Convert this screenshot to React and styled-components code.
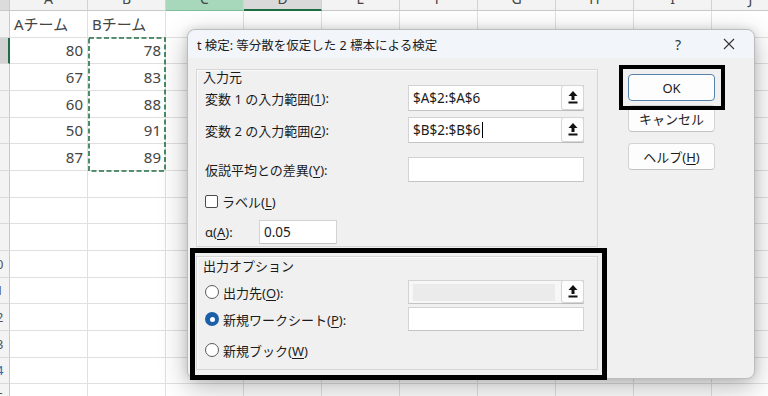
import React from 'react';
import styled, { createGlobalStyle } from 'styled-components';

const FONT = `"Noto Sans", "Noto Sans CJK JP", sans-serif`;

const GlobalStyle = createGlobalStyle`
  html, body { margin: 0; padding: 0; width: 768px; height: 396px; overflow: hidden; background: #fff; }
  #root { width: 768px; height: 396px; }
  * { box-sizing: border-box; }
`;

const Screen = styled.div`
  position: relative;
  width: 768px;
  height: 396px;
  overflow: hidden;
  background: #fff;
  font-family: ${FONT};
`;

/* ---------- spreadsheet ---------- */
const Sheet = styled.div`
  display: grid;
  grid-template-columns: 10px repeat(10, 78px);
  grid-template-rows: 11px repeat(15, 26.667px);
`;

const Corner = styled.div`
  background: #dcdcdc;
  border-right: 1px solid #c9c9c9;
  border-bottom: 1px solid #c9c9c9;
`;

const ColHeader = styled.div`
  overflow: hidden;
  display: flex;
  justify-content: center;
  background: ${p => (p.$state === 'green' ? '#a8d8bc' : p.$state === 'gray' ? '#d9d9d9' : '#f3f3f3')};
  border-right: 1px solid #d2d2d2;
  border-bottom: ${p => (p.$state === 'gray' ? '2px solid #1f6e43' : p.$state === 'green' ? '1px solid #7dbf98' : '1px solid #c9c9c9')};
  color: #444;
  font-size: 14px;
  span { display: block; line-height: 20px; margin-top: -11px; }
`;

const RowHead = styled.div`
  overflow: hidden;
  display: flex;
  align-items: center;
  background: ${p => (p.$active ? '#d3d3d3' : '#f3f3f3')};
  border-right: ${p => (p.$active ? '2px solid #1f6e43' : '1px solid #c9c9c9')};
  border-bottom: 1px solid #d9d9d9;
  font-size: 13px;
  color: ${p => (p.$blue ? '#2a6ab0' : '#555')};
  span { flex: none; width: 24px; margin-left: -16px; text-align: center; }
`;

const Cell = styled.div`
  border-right: 1px solid #e0e0e0;
  border-bottom: 1px solid #e0e0e0;
  display: flex;
  align-items: center;
  justify-content: ${p => (p.$num ? 'flex-end' : 'flex-start')};
  padding: 0 4px;
  font-size: 15px;
  color: #444;
  white-space: nowrap;
  overflow: hidden;
`;

const Marquee = styled.svg`
  position: absolute;
  left: 88px;
  top: 37px;
  width: 78px;
  height: 135px;
  overflow: visible;
`;

/* ---------- dialog ---------- */
const Dialog = styled.div`
  position: absolute;
  left: 187px;
  top: 29px;
  width: 568px;
  height: 350px;
  background: #f0f0f0;
  border: 1px solid #bcbcbc;
  border-radius: 8px;
  box-shadow: 0 8px 28px rgba(0, 0, 0, 0.28), 0 0 8px rgba(0, 0, 0, 0.12);
  display: flex;
  flex-direction: column;
  color: #1b1b1b;
`;

const TitleBar = styled.div`
  height: 28px;
  flex: none;
  display: flex;
  align-items: center;
  padding-left: 9px;
  background: #f2f5fa;
  border-radius: 8px 8px 0 0;
`;

const Title = styled.div`
  font-size: 12.5px;
  flex: 1;
  white-space: nowrap;
`;

const TitleButtons = styled.div`
  display: flex;
  gap: 5px;
  margin-right: 2px;
`;

const TitleBtn = styled.div`
  width: 46px;
  height: 28px;
  display: flex;
  align-items: center;
  justify-content: center;
  font-size: 14px;
  color: #333;
`;

const Body = styled.div`
  flex: 1;
  display: flex;
  padding: 11px 0 0 8px;
`;

const LeftCol = styled.div`
  width: 402px;
  display: flex;
  flex-direction: column;
`;

const Group = styled.div`
  border: 1px solid #d6d6d6;
  box-shadow: inset 1px 1px 0 #fafafa;
  padding: 0 13px ${p => p.$pb}px 8px;
  margin-top: ${p => p.$mt || 0}px;
`;

const Legend = styled.div`
  height: 15px;
  line-height: 15px;
  margin: ${p => p.$mt || 0}px 0 0 -2px;
  font-size: 13px;
`;

const Row = styled.div`
  display: flex;
  align-items: center;
  height: ${p => p.$h}px;
  margin-top: ${p => p.$mt || 0}px;
`;

const Label = styled.div`
  flex: none;
  width: ${p => p.$w}px;
  font-size: 13px;
  white-space: nowrap;
  display: flex;
  align-items: center;
  gap: ${p => p.$gap || 0}px;
`;

const U = styled.span`
  text-decoration: underline;
  text-underline-offset: 2px;
  text-decoration-thickness: 1px;
`;

const TextBox = styled.div`
  flex: none;
  width: ${p => p.$w}px;
  height: 100%;
  background: ${p => (p.$disabled ? '#f7f7f7' : '#fff')};
  border: 1px solid #d3d3d3;
  border-bottom-color: #c4c4c4;
  display: flex;
  align-items: center;
  padding-left: 4px;
  font-size: 13.5px;
  color: #1b1b1b;
`;

const DisabledFill = styled.div`
  flex: 1;
  height: 17px;
  margin-right: 6px;
  background: #ebebeb;
`;

const Caret = styled.span`
  display: inline-block;
  width: 1px;
  height: 16px;
  background: #000;
  margin-left: 1px;
`;

const RefBtn = styled.div`
  flex: none;
  margin-left: auto;
  width: 23px;
  height: calc(100% + 1px);
  margin-top: -1px;
  margin-right: -1px;
  background: #fdfdfd;
  border: 1px solid #d6d6d6;
  border-radius: 3px;
  box-shadow: 0 1px 1px rgba(0, 0, 0, 0.06);
  display: flex;
  align-items: center;
  justify-content: center;
`;

const Check = styled.span`
  display: inline-block;
  width: 13px;
  height: 13px;
  border: 1px solid #4a4a4a;
  border-radius: 2px;
  background: #fff;
`;

const Radio = styled.span`
  display: inline-flex;
  align-items: center;
  justify-content: center;
  width: 14px;
  height: 14px;
  border-radius: 50%;
  border: ${p => (p.$on ? 'none' : '1px solid #5a5a5a')};
  background: ${p => (p.$on ? '#1a5fa8' : '#fff')};
  &::after {
    content: '';
    display: ${p => (p.$on ? 'block' : 'none')};
    width: 5px;
    height: 5px;
    border-radius: 50%;
    background: #fff;
  }
`;

const RightCol = styled.div`
  width: 87px;
  margin-left: 30px;
  display: flex;
  flex-direction: column;
`;

const Btn = styled.div`
  height: 27px;
  margin-top: ${p => p.$mt}px;
  border: 1px solid ${p => (p.$primary ? '#5681ab' : '#d3d3d3')};
  border-bottom-color: ${p => (p.$primary ? '#5681ab' : '#c2c2c2')};
  border-radius: 4px;
  background: #fdfdfd;
  display: flex;
  align-items: center;
  justify-content: center;
  font-size: 13px;
  white-space: nowrap;
`;

const Highlight = styled.div`
  position: absolute;
  left: ${p => p.$x}px;
  top: ${p => p.$y}px;
  width: ${p => p.$w}px;
  height: ${p => p.$h}px;
  border: ${p => p.$t}px solid #000;
  pointer-events: none;
`;

const UpIcon = () => (
  <svg width="10" height="13" viewBox="0 0 10 13">
    <polygon points="5,0 9.5,5 6.5,5 6.5,9 3.5,9 3.5,5 0.5,5" fill="#111" />
    <rect x="0.5" y="10.5" width="9" height="2" fill="#111" />
  </svg>
);

const CloseIcon = () => (
  <svg width="12" height="12" viewBox="0 0 12 12">
    <path d="M1 1 L11 11 M11 1 L1 11" stroke="#333" strokeWidth="1.1" fill="none" />
  </svg>
);

const cols = ['A', 'B', 'C', 'D', 'E', 'F', 'G', 'H', 'I', 'J'];
const data = {
  1: ['Aチーム', 'Bチーム'],
  2: [80, 78],
  3: [67, 83],
  4: [60, 88],
  5: [50, 91],
  6: [87, 89],
};

export default function App() {
  const rows = Array.from({ length: 15 }, (_, i) => i + 1);
  return (
    <Screen>
      <GlobalStyle />
      <Sheet>
        <Corner />
        {cols.map(c => (
          <ColHeader key={c} $state={c === 'C' ? 'green' : c === 'D' ? 'gray' : undefined}>
            <span>{c}</span>
          </ColHeader>
        ))}
        {rows.map(r => (
          <React.Fragment key={r}>
            <RowHead $active={r === 2} $blue={r === 14}>
              <span>{r}</span>
            </RowHead>
            {cols.map((c, ci) => {
              const v = data[r] && ci < 2 ? data[r][ci] : '';
              return (
                <Cell key={c} $num={typeof v === 'number'}>
                  {v}
                </Cell>
              );
            })}
          </React.Fragment>
        ))}
      </Sheet>

      <Marquee viewBox="0 0 78 135">
        <rect x="1" y="1" width="76" height="133" fill="none" stroke="#237046" strokeWidth="1.6" strokeDasharray="5 2.5" />
      </Marquee>

      <Dialog>
        <TitleBar>
          <Title>t 検定: 等分散を仮定した 2 標本による検定</Title>
          <TitleButtons>
            <TitleBtn>?</TitleBtn>
            <TitleBtn>
              <CloseIcon />
            </TitleBtn>
          </TitleButtons>
        </TitleBar>
        <Body>
          <LeftCol>
            <Group $pb={2}>
              <Legend>入力元</Legend>
              <Row $h={26}>
                <Label $w={203}>
                  変数 1 の入力範囲(<U>1</U>):
                </Label>
                <TextBox $w={176}>
                  $A$2:$A$6
                  <RefBtn>
                    <UpIcon />
                  </RefBtn>
                </TextBox>
              </Row>
              <Row $h={26} $mt={6}>
                <Label $w={203}>
                  変数 2 の入力範囲(<U>2</U>):
                </Label>
                <TextBox $w={176}>
                  $B$2:$B$6
                  <Caret />
                  <RefBtn>
                    <UpIcon />
                  </RefBtn>
                </TextBox>
              </Row>
              <Row $h={25} $mt={14}>
                <Label $w={203}>
                  仮説平均との差異(<U>Y</U>):
                </Label>
                <TextBox $w={176} />
              </Row>
              <Row $h={26} $mt={6}>
                <Label $w={203} $gap={4}>
                  <Check />
                  <span>
                    ラベル(<U>L</U>)
                  </span>
                </Label>
              </Row>
              <Row $h={24} $mt={6}>
                <Label $w={54}>
                  α(<U>A</U>):
                </Label>
                <TextBox $w={78}>0.05</TextBox>
              </Row>
            </Group>

            <Group $pb={7} $mt={9}>
              <Legend $mt={2}>出力オプション</Legend>
              <Row $h={24} $mt={6}>
                <Label $w={203} $gap={4}>
                  <Radio />
                  <span>
                    出力先(<U>O</U>):
                  </span>
                </Label>
                <TextBox $w={176} $disabled>
                  <DisabledFill />
                  <RefBtn>
                    <UpIcon />
                  </RefBtn>
                </TextBox>
              </Row>
              <Row $h={24} $mt={3}>
                <Label $w={203} $gap={4}>
                  <Radio $on />
                  <span>
                    新規ワークシート(<U>P</U>):
                  </span>
                </Label>
                <TextBox $w={176} />
              </Row>
              <Row $h={24} $mt={7}>
                <Label $w={203} $gap={4}>
                  <Radio />
                  <span>
                    新規ブック(<U>W</U>)
                  </span>
                </Label>
              </Row>
            </Group>
          </LeftCol>

          <RightCol>
            <Btn $mt={5} $primary>OK</Btn>
            <Btn $mt={4}>キャンセル</Btn>
            <Btn $mt={11}>
              ヘルプ(<U>H</U>)
            </Btn>
          </RightCol>
        </Body>

        <Highlight $x={431} $y={35} $w={106} $h={45} $t={4} />
        <Highlight $x={2} $y={218} $w={417} $h={132} $t={5} />
      </Dialog>
    </Screen>
  );
}
